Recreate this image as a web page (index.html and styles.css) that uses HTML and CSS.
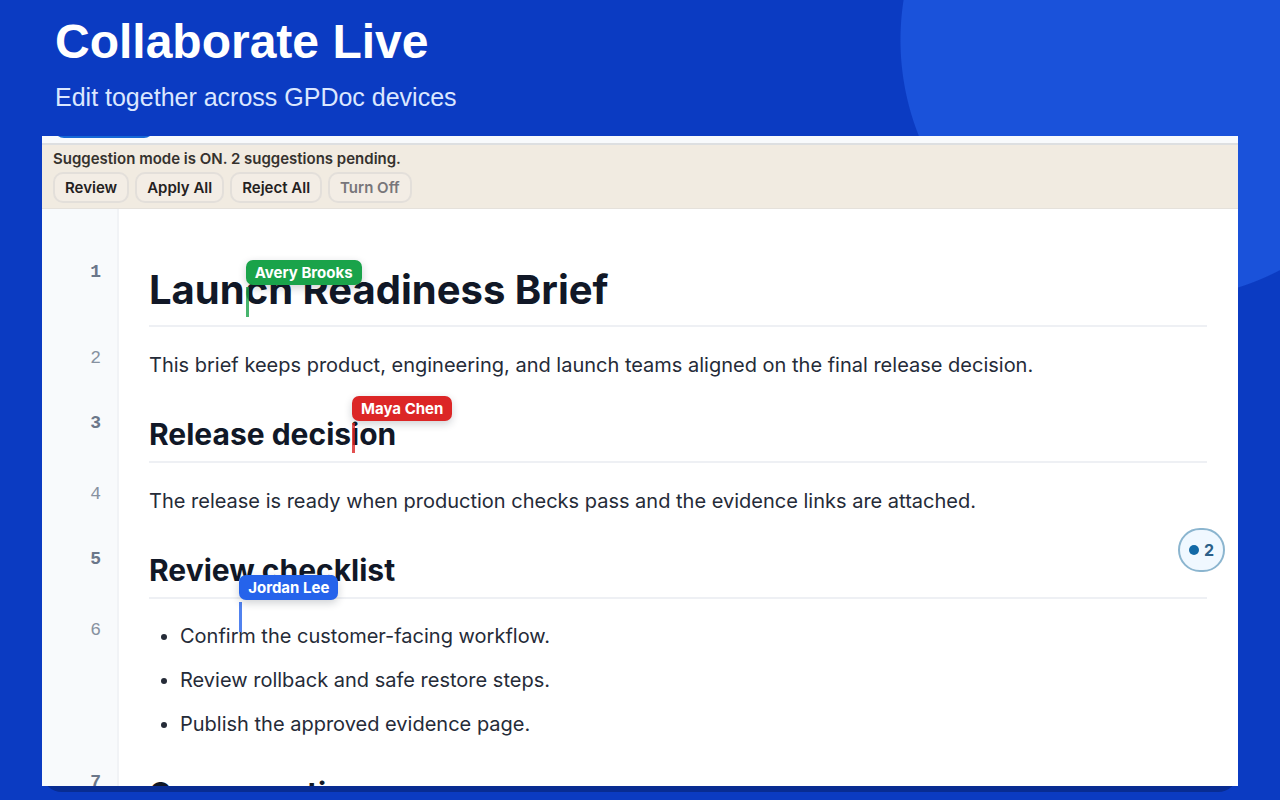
FILE: index.html
```html
<!DOCTYPE html>
<html lang="en">
<head>
<meta charset="utf-8">
<meta name="viewport" content="width=device-width, initial-scale=1">
<title>Collaborate Live</title>
<link rel="stylesheet" href="styles.css">
</head>
<body>
<header class="hero">
  <h1 class="hero-title">Collaborate Live</h1>
  <p class="hero-subtitle">Edit together across GPDoc devices</p>
</header>
<main class="frame">
  <div class="window">
    <div class="toolbar"><span class="toolbar-tab"></span></div>
    <section class="banner" aria-label="Suggestion mode">
      <p class="banner-text">Suggestion mode is ON. 2 suggestions pending.</p>
      <div class="banner-actions">
        <button class="btn" type="button">Review</button>
        <button class="btn" type="button">Apply All</button>
        <button class="btn" type="button">Reject All</button>
        <button class="btn btn-muted" type="button">Turn Off</button>
      </div>
    </section>
    <article class="editor">
      <div class="row row-title">
        <span class="line-no line-no-strong">1</span>
        <div class="block"><h2 class="title">Laun<span class="cursor cursor-green"><span class="tag">Avery Brooks</span></span>ch Readiness Brief</h2></div>
      </div>
      <div class="row row-text">
        <span class="line-no">2</span>
        <div class="block"><p class="text">This brief keeps product, engineering, and launch teams aligned on the final release decision.</p></div>
      </div>
      <div class="row row-heading">
        <span class="line-no line-no-strong">3</span>
        <div class="block"><h3 class="heading">Release decis<span class="cursor cursor-red"><span class="tag">Maya Chen</span></span>ion</h3></div>
      </div>
      <div class="row row-text">
        <span class="line-no">4</span>
        <div class="block"><p class="text">The release is ready when production checks pass and the evidence links are attached.</p></div>
      </div>
      <div class="row row-heading">
        <span class="line-no line-no-strong">5</span>
        <div class="block"><h3 class="heading">Review checklist</h3></div>
      </div>
      <div class="row row-list">
        <span class="line-no">6</span>
        <div class="block">
          <ul class="list">
            <li>Confir<span class="cursor cursor-blue"><span class="tag">Jordan Lee</span></span>m the customer-facing workflow.</li>
            <li>Review rollback and safe restore steps.</li>
            <li>Publish the approved evidence page.</li>
          </ul>
        </div>
      </div>
      <div class="row row-heading">
        <span class="line-no line-no-strong">7</span>
        <div class="block"><h3 class="heading">Open question</h3></div>
      </div>
      <button class="comments" type="button" aria-label="2 comments"><span class="comments-dot"></span>2</button>
    </article>
  </div>
</main>
</body>
</html>
```
FILE: styles.css
```css
* { box-sizing: border-box; }

body {
  display: flex;
  flex-direction: column;
  height: 100vh;
  margin: 0;
  overflow: hidden;
  background: radial-gradient(circle at calc(100% - 120px) 40px, #1a52da 259px, #0b3bc2 260px);
  color: #111827;
  font-family: Inter, "Liberation Sans", sans-serif;
}

h1, h2, h3, p, ul { margin: 0; }

.hero {
  padding: 14px 55px 23px;
  color: #fff;
  font-family: "Liberation Sans", Arial, sans-serif;
}

.hero-title { font-size: 48px; line-height: 56px; }

.hero-subtitle {
  padding-top: 11px;
  font-size: 25px;
  line-height: 32px;
  color: #dbe7ff;
}

.frame {
  flex: 1;
  min-height: 0;
  margin: 0 42px 8px;
  padding-bottom: 6px;
  border-radius: 0 0 20px 20px;
  background: #082c92;
}

.window { height: 100%; overflow: hidden; background: #fff; }

.toolbar {
  height: 9px;
  padding-left: 12px;
  border-bottom: 2px solid #dddfe1;
  background: #f8fafc;
  overflow: hidden;
}

.toolbar-tab {
  display: block;
  width: 100px;
  height: 20px;
  margin-top: -18px;
  border-radius: 10px;
  background: #1668d6;
}

.banner {
  padding: 4px 11px 5px;
  border-bottom: 1px solid #e5e1db;
  background: #f1ebe1;
}

.banner-text {
  color: #35322e;
  font-size: 15px;
  font-weight: 600;
  line-height: 20px;
}

.banner-actions { display: flex; gap: 6px; padding-top: 3px; }

.btn {
  height: 31px;
  padding: 0 10px;
  border: 2px solid #e3dfda;
  border-radius: 10px;
  background: #f3ede5;
  color: #24211e;
  font: 600 15px/20px Inter, "Liberation Sans", sans-serif;
}

.btn-muted { color: #78767a; }

.editor { position: relative; }

.row { display: grid; grid-template-columns: 77px 1fr; }

.line-no {
  padding-right: 16px;
  border-right: 2px solid #f1f3f6;
  background: #f8fafc;
  color: #8791a0;
  font-family: "Liberation Mono", monospace;
  font-size: 18px;
  line-height: 20px;
  text-align: right;
}

.line-no-strong { color: #6b778a; font-weight: 700; }

.block { padding: 0 31px 0 30px; }

.row-title .line-no { padding-top: 53px; }
.row-title .block { padding-top: 54px; }
.row-text .line-no { padding-top: 21px; }
.row-text .block { padding-top: 22px; padding-bottom: 17px; }
.row-heading .line-no { padding-top: 15px; }
.row-heading .block { padding-top: 16px; }
.row-list .line-no { padding-top: 21px; }
.row-list .block { padding-top: 15px; padding-bottom: 11px; }

.title {
  padding-bottom: 8px;
  border-bottom: 2px solid #eef0f4;
  font-size: 40px;
  font-weight: 700;
  line-height: 54px;
}

.heading {
  padding-bottom: 7px;
  border-bottom: 2px solid #eef0f4;
  font-size: 30px;
  font-weight: 700;
  line-height: 40px;
}

.text { color: #252b38; font-size: 20px; line-height: 32px; }

.list {
  padding-left: 31px;
  color: #252b38;
  font-size: 20px;
  line-height: 44px;
}

.cursor { position: relative; }

.cursor::before {
  content: "";
  position: absolute;
  bottom: var(--base);
  left: 1px;
  width: 3px;
  height: 30px;
  background: var(--user);
  opacity: 0.8;
}

.tag {
  position: absolute;
  bottom: calc(var(--base) + 32px);
  left: 1px;
  padding: 0 9px;
  border-radius: 7px;
  background: var(--user);
  box-shadow: 0 3px 8px #0f172a33;
  color: #fff;
  font-size: 15px;
  font-weight: 700;
  line-height: 25px;
  white-space: nowrap;
}

.cursor-green { --user: #1aa34a; --base: -3px; }
.cursor-red { --user: #dc2626; --base: -1px; }
.cursor-blue { --user: #2563eb; --base: 16px; }

.comments {
  position: absolute;
  top: 319px;
  right: 13px;
  display: flex;
  align-items: center;
  justify-content: center;
  gap: 5px;
  width: 47px;
  height: 44px;
  padding: 0;
  border: 2px solid #8bb5cf;
  border-radius: 22px;
  background: #f0f8ff;
  color: #2c6089;
  font: 700 16px/20px Inter, "Liberation Sans", sans-serif;
}

.comments-dot { width: 10px; height: 10px; border-radius: 50%; background: #1369a6; }
```
